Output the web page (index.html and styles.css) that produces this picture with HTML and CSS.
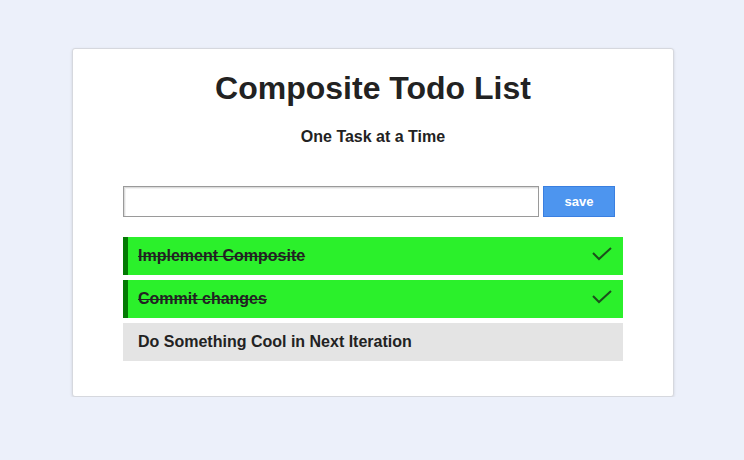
FILE: index.html
```html
<!DOCTYPE html>
<html>
<head>
<meta charset="utf-8">
<link rel="stylesheet" href="styles.css">
</head>
<body>
<div class="card">
  <h1 class="title">Composite Todo List</h1>
  <h2 class="subtitle">One Task at a Time</h2>
  <div class="form">
    <input class="field" type="text">
    <button class="save">save</button>
  </div>
  <ul class="list">
    <li class="item done"><span class="text">Implement Composite</span>
      <svg class="check" width="20" height="14" viewBox="0 0 20 14"><polyline points="1,6 7,12 19,1" fill="none" stroke="#1c4f1c" stroke-width="2"/></svg>
    </li>
    <li class="item done"><span class="text">Commit changes</span>
      <svg class="check" width="20" height="14" viewBox="0 0 20 14"><polyline points="1,6 7,12 19,1" fill="none" stroke="#1c4f1c" stroke-width="2"/></svg>
    </li>
    <li class="item"><span class="text">Do Something Cool in Next Iteration</span></li>
  </ul>
</div>
</body>
</html>
```
FILE: styles.css
```css
html, body {
  margin: 0;
  padding: 0;
}
body {
  background: #ecf0fa;
  font-family: "Liberation Sans", Arial, sans-serif;
  color: #222;
  padding-top: 48px;
}
.card {
  box-sizing: border-box;
  width: 602px;
  margin-left: 72px;
  background: #fff;
  border: 1px solid #d6d8de;
  border-radius: 3px;
  box-shadow: 0 1px 3px rgba(0,0,0,0.12);
  padding: 21px 50px 35px;
}
.title {
  margin: 0;
  font-size: 32px;
  line-height: 37px;
  font-weight: bold;
  text-align: center;
  color: #222;
}
.subtitle {
  margin: 21px 0 0;
  font-size: 16px;
  line-height: 18px;
  font-weight: bold;
  text-align: center;
  color: #222;
}
.form {
  display: flex;
  gap: 4px;
  margin-top: 40px;
  height: 31px;
}
.field {
  box-sizing: border-box;
  width: 416px;
  height: 31px;
  margin: 0;
  border: 1px solid #9a9a9a;
  box-shadow: inset 1px 1px 0 #dcdcdc, inset 2px 2px 0 #f2f2f2;
  padding: 0 4px;
  font-size: 14px;
  outline: none;
}
.save {
  box-sizing: border-box;
  width: 72px;
  height: 31px;
  margin: 0;
  background: #4d95ef;
  border: 1px solid #3a7fe0;
  color: #fff;
  font-family: "Liberation Sans", Arial, sans-serif;
  font-weight: bold;
  font-size: 13px;
  padding: 0;
}
.list {
  list-style: none;
  margin: 20px 0 0;
  padding: 0;
  display: flex;
  flex-direction: column;
  gap: 5px;
}
.item {
  box-sizing: border-box;
  height: 38px;
  display: flex;
  align-items: center;
  justify-content: space-between;
  padding: 0 11px 0 15px;
  background: #e4e4e4;
  font-size: 16px;
  font-weight: bold;
  color: #222;
}
.item.done {
  background: #2bf02b;
  border-left: 5px solid #047a04;
  padding-left: 10px;
}
.item.done .text {
  text-decoration: line-through;
}
.check {
  display: block;
  margin-top: -4px;
}
```
